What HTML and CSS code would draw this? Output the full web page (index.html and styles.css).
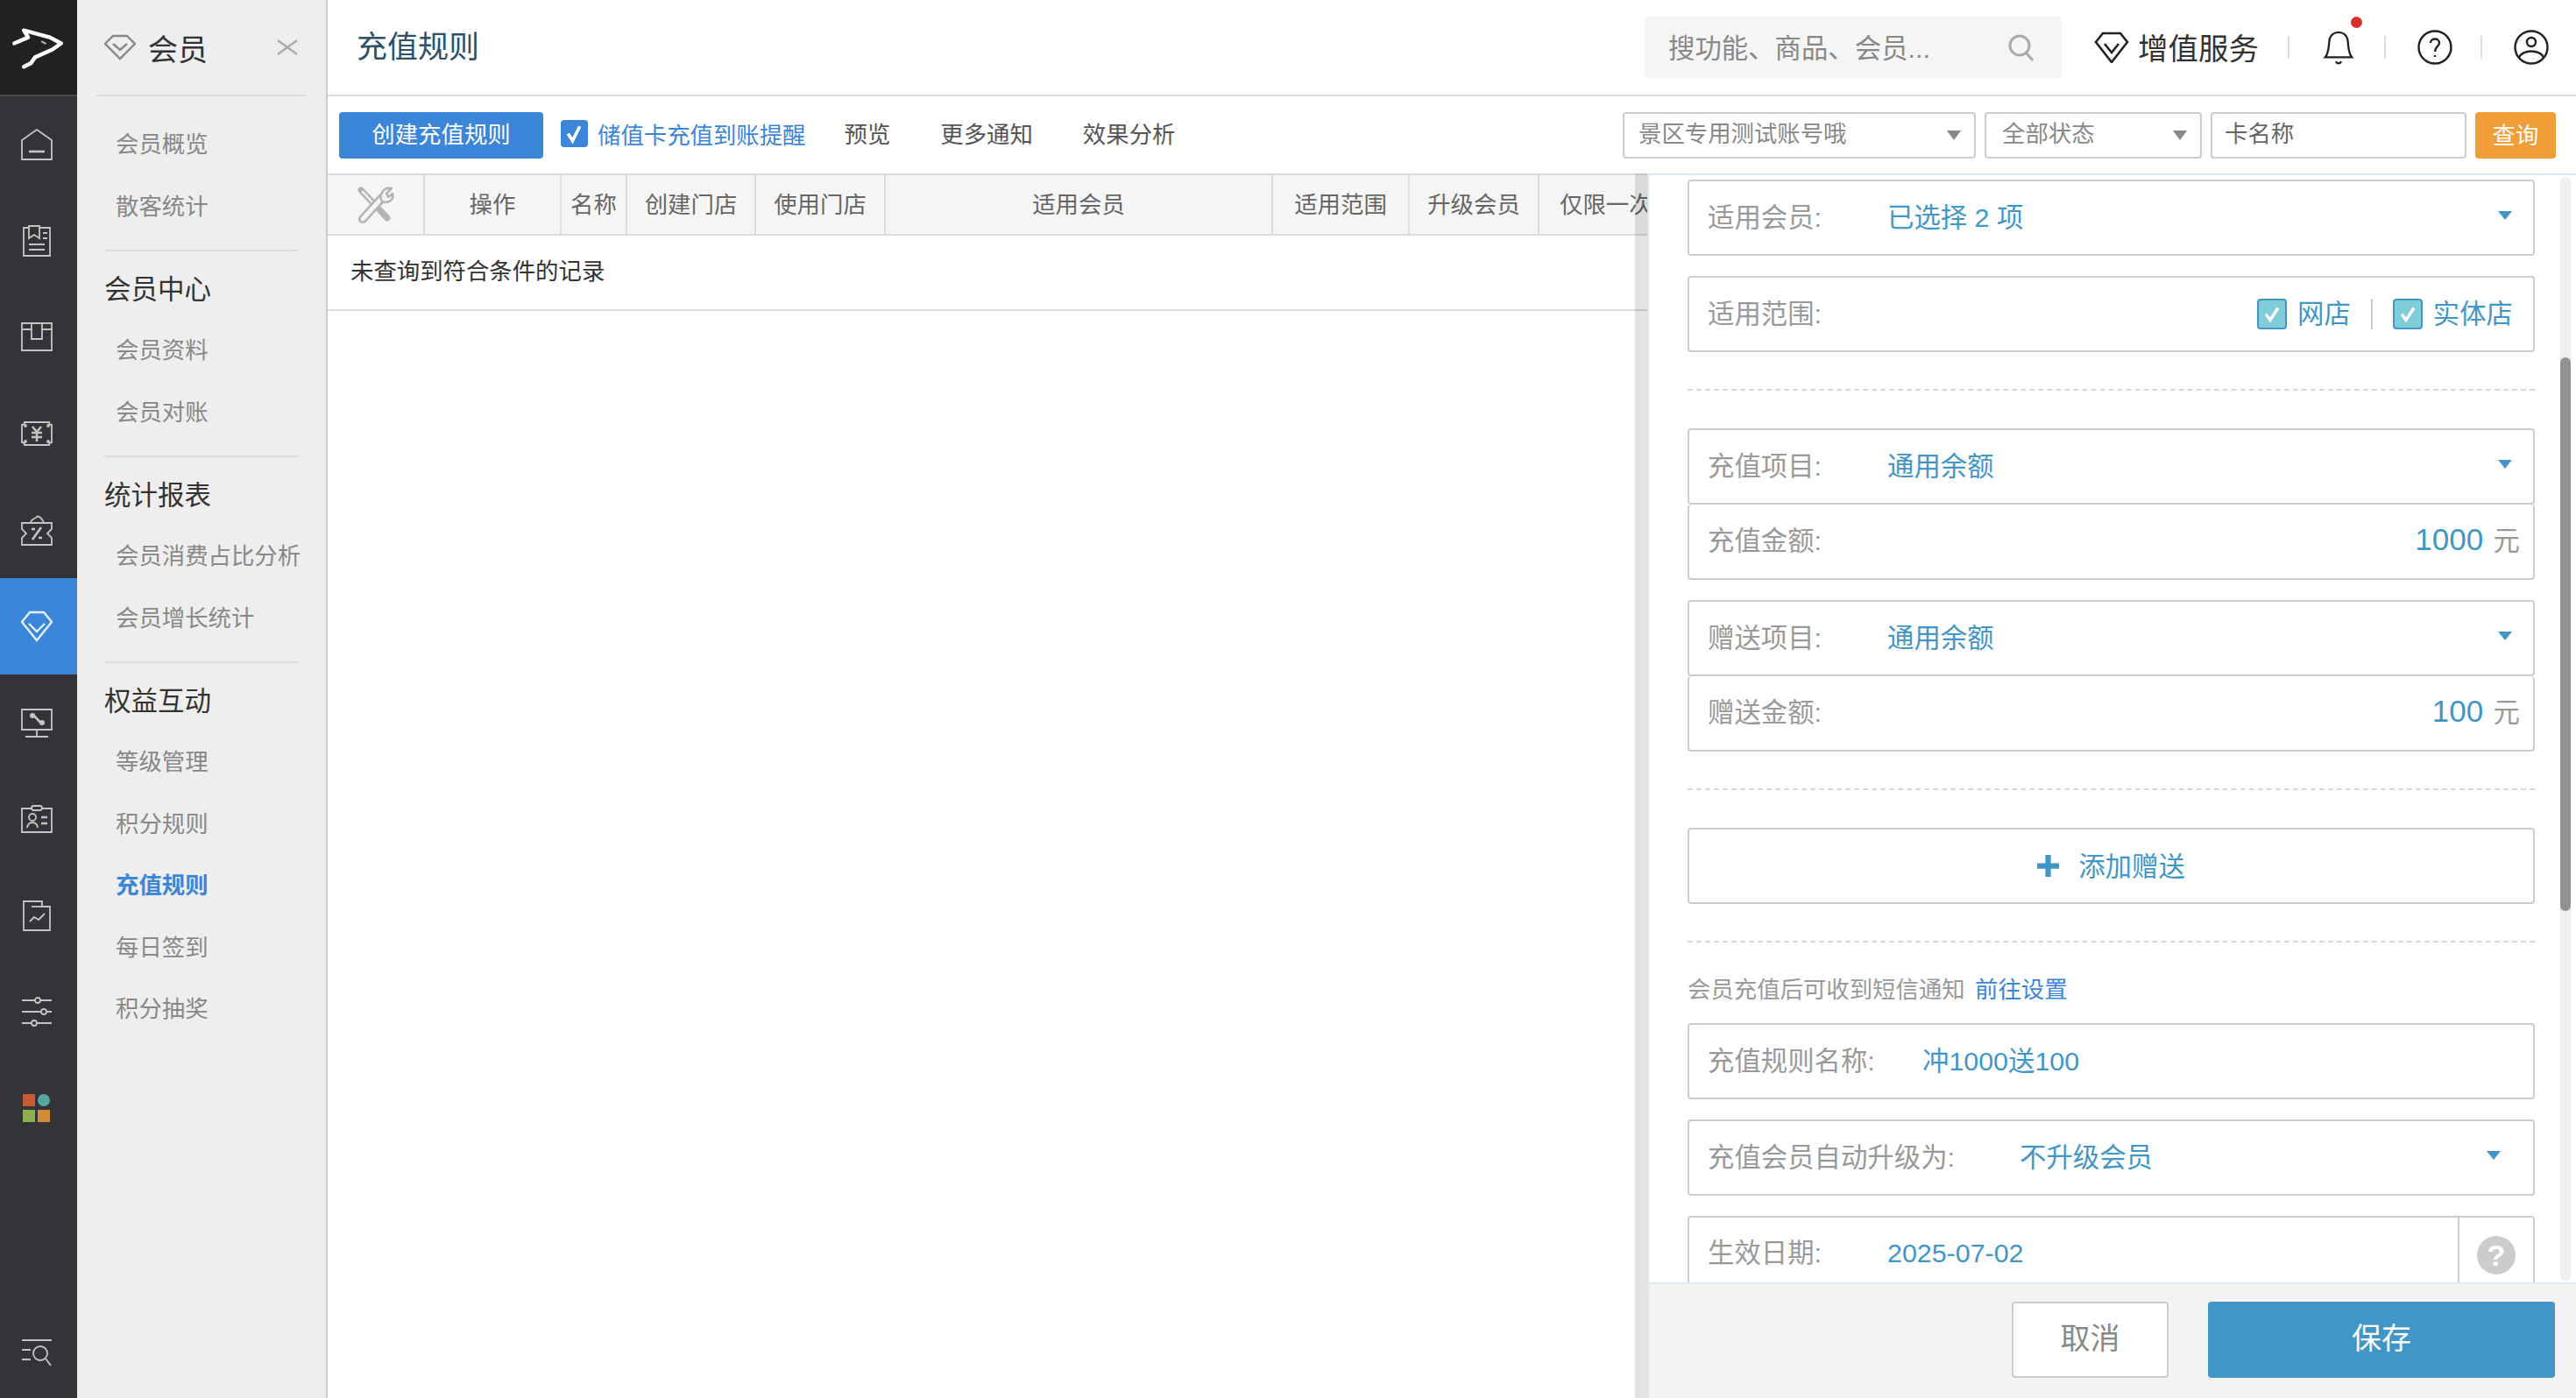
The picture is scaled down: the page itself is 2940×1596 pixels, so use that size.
FILE: index.html
```html
<!DOCTYPE html>
<html lang="zh-CN">
<head>
  <meta charset="UTF-8" />
  <title>充值规则</title>
  <link rel="stylesheet" href="styles.css">
</head>
<body>
  <!-- Icon rail -->
  <nav class="rail">
    <div class="rail-logo">
      <svg viewBox="0 0 88 109" class="logo-mark"><path d="M16 50 L32 43 L27 35 L57 43 L70 50 L60 57 L40 66 L35 73 L27 77"/><path d="M48 48 L52 50" class="logo-eye"/></svg>
    </div>
    <a class="rail-item"><svg viewBox="0 0 36 36" class="rail-icon"><path d="M1 13 L18 1 L35 13 V35 H1 Z"/><path d="M9 26 H27" class="icon-bold"/></svg></a>
    <a class="rail-item"><svg viewBox="0 0 36 36" class="rail-icon"><path d="M3 3 H33 V35 H3 Z"/><path d="M9 1 H21 V15 L15 11 L9 15 Z" class="icon-knob"/><path d="M25 9 H30 M25 15 H30 M9 22 H27 M9 28 H27"/></svg></a>
    <a class="rail-item"><svg viewBox="0 0 36 36" class="rail-icon"><path d="M1 2 H35 V33 H1 Z"/><path d="M1 9 H12 M24 9 H35"/><path d="M12 2 V20 H24 V2"/></svg></a>
    <a class="rail-item"><svg viewBox="0 0 36 36" class="rail-icon"><path d="M4 5 H32 Q32 8 35 8 V28 Q32 28 32 31 H4 Q4 28 1 28 V8 Q4 8 4 5 Z"/><circle cx="5" cy="9" r="1"/><circle cx="31" cy="9" r="1"/><circle cx="5" cy="27" r="1"/><circle cx="31" cy="27" r="1"/><path d="M13 10 L18 16 L23 10 M12 17 H24 M12 22 H24 M18 16 V27" class="icon-bold"/></svg></a>
    <a class="rail-item"><svg viewBox="0 0 36 36" class="rail-icon"><path d="M1 10 H35 V17 L30 22 L35 27 V35 H1 V27 L6 22 L1 17 Z"/><path d="M11 10 C11 5 16 6 18 3 C20 1 25 6 26 10"/><path d="M13 29 L23 15 M12 17 H16 M20 27 H24" class="icon-bold"/></svg></a>
    <a class="rail-item rail-item-active"><svg viewBox="0 0 36 36" class="rail-icon"><path d="M10 2 H26 L35 13 L18 34 L1 13 Z"/><path d="M9 15 L18 24 L27 15"/></svg></a>
    <a class="rail-item"><svg viewBox="0 0 36 36" class="rail-icon"><path d="M1 3 H35 V26 H1 Z"/><path d="M18 26 V33 M5 34 H31"/><path d="M13 8 L24 20" class="icon-bold"/><circle cx="13" cy="10" r="3" class="icon-dot"/><circle cx="24" cy="18" r="3" class="icon-dot"/></svg></a>
    <a class="rail-item"><svg viewBox="0 0 36 36" class="rail-icon"><path d="M1 6 H35 V33 H1 Z"/><rect x="12" y="3" width="12" height="5" rx="2.5" class="icon-knob"/><circle cx="13" cy="16" r="4"/><path d="M7 28 C8 20 18 20 19 28"/><path d="M23 16 H30 M23 23 H30" class="icon-bold"/></svg></a>
    <a class="rail-item"><svg viewBox="0 0 36 36" class="rail-icon"><path d="M3 2 H24 V8 H33 V35 H3 Z"/><path d="M12 8 H24"/><path d="M10 25 L15 20 L20 23 L27 16"/></svg></a>
    <a class="rail-item"><svg viewBox="0 0 36 36" class="rail-icon"><path d="M1 5 H35 M1 18 H35 M1 31 H35"/><circle cx="19" cy="5" r="3" class="icon-knob"/><circle cx="26" cy="18" r="3" class="icon-knob"/><circle cx="15" cy="31" r="3" class="icon-knob"/></svg></a>
    <a class="rail-item"><svg viewBox="0 0 32 32" class="rail-icon rail-apps"><rect x="0" y="0" width="14" height="14" class="app-red"/><ellipse cx="24" cy="7" rx="7" ry="7" class="app-teal"/><rect x="0" y="18" width="14" height="14" class="app-green"/><rect x="17" y="18" width="14" height="14" class="app-orange"/></svg></a>
    <a class="rail-item rail-bottom"><svg viewBox="0 0 36 36" class="rail-icon"><path d="M1 3 H35 M1 14 H11 M1 25 H11"/><circle cx="22" cy="18" r="8"/><path d="M28 24 L34 32"/></svg></a>
  </nav>

  <!-- Second level menu -->
  <aside class="subnav">
    <div class="subnav-head">
      <svg viewBox="0 0 36 36" class="subnav-gem"><path d="M10 5 H26 L35 14 L18 31 L1 14 Z"/><path d="M10 14 L18 21 L26 14"/></svg>
      <span class="subnav-title">会员</span>
      <svg viewBox="0 0 24 24" class="subnav-close"><path d="M1 4 L23 20 M23 4 L1 20"/></svg>
    </div>
    <ul class="menu-list menu-list-first">
      <li>会员概览</li>
      <li>散客统计</li>
    </ul>
    <h3 class="menu-title">会员中心</h3>
    <ul class="menu-list">
      <li>会员资料</li>
      <li>会员对账</li>
    </ul>
    <h3 class="menu-title">统计报表</h3>
    <ul class="menu-list">
      <li>会员消费占比分析</li>
      <li>会员增长统计</li>
    </ul>
    <h3 class="menu-title">权益互动</h3>
    <ul class="menu-list menu-list-last">
      <li>等级管理</li>
      <li>积分规则</li>
      <li class="menu-active">充值规则</li>
      <li>每日签到</li>
      <li>积分抽奖</li>
    </ul>
  </aside>

  <div class="main">
    <header class="topbar">
      <h1 class="page-title">充值规则</h1>
      <div class="search">
        <span class="search-text">搜功能、商品、会员...</span>
        <svg viewBox="0 0 32 32" class="search-icon"><circle cx="14" cy="14" r="11"/><path d="M22 23 L29 31"/></svg>
      </div>
      <div class="service">
        <svg viewBox="0 0 40 36" class="service-icon"><path d="M10 2 H30 L38 12 L20 35 L2 12 Z"/><path d="M12 14 L20 24 L28 14"/></svg>
        <span class="service-text">增值服务</span>
      </div>
      <i class="top-sep"></i>
      <div class="top-icon">
        <svg viewBox="0 0 40 44" class="top-svg"><path d="M4 34 C9 28 8 20 9 14 C10 7 15 4 20 4 C25 4 30 7 31 14 C32 20 31 28 36 34 Z"/><path d="M17 39 C18 42 22 42 23 39"/></svg>
        <b class="bell-dot"></b>
      </div>
      <i class="top-sep"></i>
      <div class="top-icon">
        <svg viewBox="0 0 40 40" class="top-svg"><circle cx="20" cy="20" r="18.5"/><path d="M15 15 C15 9 25 9 25 15 C25 19 20 19 20 25"/><path d="M20 29 V31"/></svg>
      </div>
      <i class="top-sep"></i>
      <div class="top-icon">
        <svg viewBox="0 0 40 40" class="top-svg"><circle cx="20" cy="20" r="18.5"/><circle cx="20" cy="14" r="5"/><path d="M6 32 C9 22 31 22 34 32"/></svg>
      </div>
    </header>

    <div class="toolbar">
      <button class="btn-create">创建充值规则</button>
      <label class="remind">
        <span class="remind-box"><svg viewBox="0 0 30 30" class="remind-check"><path d="M8 15 L13 23 L21 7"/></svg></span>
        <span>储值卡充值到账提醒</span>
      </label>
      <a class="tool-link">预览</a>
      <a class="tool-link">更多通知</a>
      <a class="tool-link">效果分析</a>
      <div class="filters">
        <div class="filter filter-shop">景区专用测试账号哦<i class="filter-caret"></i></div>
        <div class="filter filter-status">全部状态<i class="filter-caret"></i></div>
        <div class="filter filter-name">卡名称</div>
        <button class="btn-query">查询</button>
      </div>
    </div>

    <div class="content">
      <section class="table-wrap">
        <div class="table-head">
          <div class="th">
            <svg viewBox="0 0 44 44" class="tools-icon">
              <path d="M5 5 L35 37" class="tool-outer"/>
              <path d="M7 7 L20 21" class="tool-inner"/>
              <path d="M7 38 L29 14" class="wrench-outer"/>
              <path d="M7 38 L29 14" class="wrench-inner"/>
              <path d="M40 3 L34 9 L36 13 L41 9 C43 16 36 21 29 18 C25 12 30 1 40 3 Z" class="wrench-head"/>
            </svg>
          </div>
          <div class="th">操作</div>
          <div class="th">名称</div>
          <div class="th">创建门店</div>
          <div class="th">使用门店</div>
          <div class="th">适用会员</div>
          <div class="th">适用范围</div>
          <div class="th">升级会员</div>
          <div class="th th-clip">仅限一次</div>
        </div>
        <div class="table-empty">未查询到符合条件的记录</div>
      </section>

      <div class="panel-edge"></div>

      <section class="panel">
        <div class="panel-body">
          <div class="field field-single">
            <span class="field-label">适用会员:</span>
            <span class="field-value">已选择 2 项</span>
            <i class="caret"></i>
          </div>
          <div class="field field-single">
            <span class="field-label">适用范围:</span>
            <div class="scope">
              <span class="scope-box"><svg viewBox="0 0 30 30" class="scope-check"><path d="M8 15 L13 22 L22 8"/></svg></span>
              <span class="field-value">网店</span>
              <i class="scope-sep"></i>
              <span class="scope-box"><svg viewBox="0 0 30 30" class="scope-check"><path d="M8 15 L13 22 L22 8"/></svg></span>
              <span class="field-value">实体店</span>
            </div>
          </div>

          <hr class="dash">

          <div class="field-group">
            <div class="field">
              <span class="field-label">充值项目:</span>
              <span class="field-value">通用余额</span>
              <i class="caret"></i>
            </div>
            <div class="field field-amount">
              <span class="field-label">充值金额:</span>
              <span class="amount"><span class="amount-num">1000</span> 元</span>
            </div>
          </div>
          <div class="field-group">
            <div class="field">
              <span class="field-label">赠送项目:</span>
              <span class="field-value">通用余额</span>
              <i class="caret"></i>
            </div>
            <div class="field field-amount">
              <span class="field-label">赠送金额:</span>
              <span class="amount"><span class="amount-num">100</span> 元</span>
            </div>
          </div>

          <hr class="dash">

          <div class="field field-add">
            <svg viewBox="0 0 24 24" class="plus-icon"><path d="M9 0 H15 V9 H24 V15 H15 V24 H9 V15 H0 V9 H9 Z"/></svg>
            <span class="field-value">添加赠送</span>
          </div>

          <hr class="dash dash-note">

          <p class="sms-note">会员充值后可收到短信通知 <a class="sms-link">前往设置</a></p>

          <div class="field field-single">
            <span class="field-label label-name">充值规则名称:</span>
            <span class="field-value">冲1000送100</span>
          </div>
          <div class="field field-single">
            <span class="field-label label-upgrade">充值会员自动升级为:</span>
            <span class="field-value">不升级会员</span>
            <i class="caret caret-upgrade"></i>
          </div>
          <div class="field field-date">
            <span class="field-label">生效日期:</span>
            <span class="field-value">2025-07-02</span>
            <span class="date-help"><b class="help-circle">?</b></span>
          </div>
        </div>
        <div class="panel-foot">
          <button class="btn-cancel">取消</button>
          <button class="btn-save">保存</button>
        </div>
        <div class="scrollbar"><div class="scrollbar-thumb"></div></div>
      </section>
    </div>
  </div>
</body>
</html>
```

FILE: styles.css
```css
/* Reset and base */
* {
  margin: 0;
  padding: 0;
  box-sizing: border-box;
}
html, body {
  width: 2940px;
  height: 1596px;
  overflow: hidden;
}
body {
  display: flex;
  font-family: "Liberation Sans", "Noto Sans CJK SC", sans-serif;
  font-size: 26.4px;
  color: #333;
  background: #fff;
}
button {
  font-family: inherit;
  border: none;
}
svg {
  display: block;
}
ul {
  list-style: none;
}
i {
  font-style: normal;
}

/* Icon rail */
.rail {
  width: 88px;
  flex: none;
  height: 1596px;
  display: flex;
  flex-direction: column;
  background: #333437;
}
.rail-logo {
  height: 110px;
  flex: none;
  background: #222120;
  border-bottom: 2px solid #47484a;
}
.logo-mark {
  width: 88px;
  height: 108px;
  fill: none;
  stroke: #fff;
  stroke-width: 4.5;
  stroke-linejoin: round;
  stroke-linecap: round;
}
.logo-eye {
  stroke-width: 2;
  stroke: #bbb;
}
.rail-item {
  height: 110px;
  flex: none;
  display: flex;
  align-items: center;
  justify-content: center;
  padding-right: 5px;
}
.rail-item-active {
  background: #3b86d8;
}
.rail-bottom {
  height: 102px;
  margin-top: auto;
}
.rail-icon {
  width: 36px;
  height: 36px;
  fill: none;
  stroke: #c4c4c4;
  stroke-width: 1.8;
}
.rail-item-active .rail-icon {
  stroke: #e6f0fa;
  stroke-width: 2.4;
}
.icon-bold {
  stroke-width: 2.6;
}
.icon-knob {
  fill: #333437;
}
.icon-dot {
  fill: #c4c4c4;
  stroke: none;
}
.rail-apps {
  width: 32px;
  height: 32px;
  stroke: none;
}
.app-red { fill: #c95a36; }
.app-teal { fill: #58a69c; }
.app-green { fill: #8cb04e; }
.app-orange { fill: #d28b36; }

/* Second level menu */
.subnav {
  width: 286px;
  flex: none;
  height: 1596px;
  padding: 0 31px 0 31px;
  background: #eee;
  border-right: 2px solid #ccc;
}
.subnav-head {
  height: 110px;
  display: flex;
  align-items: center;
  margin: 0 -9px 0 -9px;
  padding: 0 10px 0 9px;
  border-bottom: 2px solid #ddd;
}
.subnav-gem {
  width: 36px;
  height: 36px;
  fill: none;
  stroke: #888;
  stroke-width: 2.4;
}
.subnav-title {
  margin-left: 14px;
  font-size: 34px;
  color: #333;
}
.subnav-close {
  width: 24px;
  height: 24px;
  margin-left: auto;
  fill: none;
  stroke: #aaa;
  stroke-width: 2.4;
}
.menu-list {
  padding: 0 0 14px;
  border-bottom: 2px solid #ddd;
}
.menu-list-first {
  padding-top: 20px;
}
.menu-list-last {
  border-bottom: none;
}
.menu-list li {
  height: 70.5px;
  line-height: 71px;
  padding-left: 13px;
  color: #888;
  white-space: nowrap;
}
.menu-list li.menu-active {
  color: #3b86d8;
  font-weight: 700;
}
.menu-title {
  height: 78px;
  padding-top: 21px;
  font-size: 30.5px;
  line-height: 44px;
  font-weight: 400;
  color: #333;
  white-space: nowrap;
}

/* Main column */
.main {
  flex: 1;
  min-width: 0;
  display: flex;
  flex-direction: column;
  height: 1596px;
}
.topbar {
  height: 110px;
  flex: none;
  display: flex;
  align-items: center;
  padding: 0 31px 0 33px;
  border-bottom: 2px solid #ddd;
}
.page-title {
  font-size: 35px;
  font-weight: 400;
  color: #2f5069;
  margin-bottom: 7px;
}
.search {
  width: 476px;
  height: 70px;
  margin-left: auto;
  display: flex;
  align-items: center;
  justify-content: space-between;
  padding: 0 30px 0 27px;
  background: #f5f5f5;
  border-radius: 4px;
  font-size: 30.4px;
  color: #888;
}
.search-text {
  margin-bottom: 3px;
}
.search-icon {
  width: 32px;
  height: 32px;
  fill: none;
  stroke: #aaa;
  stroke-width: 3;
}
.service {
  display: flex;
  align-items: center;
  gap: 10px;
  margin-left: 37px;
  margin-right: 1px;
  font-size: 34.5px;
  color: #333;
}
.service-text {
  margin-bottom: 3px;
}
.service-icon {
  width: 40px;
  height: 36px;
  fill: none;
  stroke: #222;
  stroke-width: 2.6;
}
.top-sep {
  width: 2px;
  height: 26px;
  margin-left: 32px;
  background: #ddd;
}
.top-icon {
  position: relative;
  width: 40px;
  margin-left: 36px;
}
.top-svg {
  width: 40px;
  height: 42px;
  fill: none;
  stroke: #222;
  stroke-width: 2.4;
}
.bell-dot {
  position: absolute;
  top: -14px;
  right: -7px;
  width: 13px;
  height: 13px;
  border-radius: 50%;
  background: #d9302c;
}

/* Toolbar */
.toolbar {
  height: 88px;
  flex: none;
  display: flex;
  align-items: center;
  padding: 1px 23px 0 13px;
}
.btn-create {
  width: 233px;
  height: 53px;
  padding-bottom: 6px;
  background: #3b86d8;
  color: #fff;
  font-size: 26.4px;
  border-radius: 4px;
}
.remind {
  display: flex;
  align-items: center;
  gap: 11px;
  margin-left: 20px;
  margin-bottom: 4px;
  color: #3b86d8;
}
.remind-box {
  width: 31px;
  height: 31px;
  background: #3b86d8;
  border-radius: 4px;
}
.remind-check {
  width: 31px;
  height: 31px;
  fill: none;
  stroke: #fff;
  stroke-width: 3.5;
}
.tool-link {
  margin-left: 57px;
  margin-bottom: 6px;
  color: #555;
}
.remind + .tool-link {
  margin-left: 44px;
}
.filters {
  margin-left: auto;
  display: flex;
  align-items: center;
  gap: 10px;
  margin-top: -1px;
}
.filter {
  position: relative;
  height: 53px;
  line-height: 46px;
  padding-left: 16px;
  border: 2px solid #ccc;
  border-radius: 4px;
  color: #888;
}
.filter-shop { width: 403px; }
.filter-status { width: 248px; padding-left: 18px; }
.filter-name { width: 292px; padding-left: 14px; color: #666; }
.filter-caret {
  position: absolute;
  top: 19px;
  right: 15px;
  width: 0;
  height: 0;
  border-left: 8px solid transparent;
  border-right: 8px solid transparent;
  border-top: 11px solid #888;
}
.btn-query {
  width: 92px;
  height: 53px;
  padding-bottom: 4px;
  background: #f19d38;
  color: #fff;
  font-size: 26.4px;
  border-radius: 4px;
}

/* Content: table + slide panel */
.content {
  position: relative;
  flex: 1;
  min-height: 0;
  display: flex;
}
.table-wrap {
  width: 1506px;
  flex: none;
  overflow: hidden;
}
.table-head {
  display: grid;
  grid-template-columns: 111px 156px 75px 147px 148px 442px 156px 148px 123px;
  height: 71px;
  background: #f5f5f5;
  border-top: 2px solid #ddd;
  border-bottom: 2px solid #ddd;
}
.th {
  display: flex;
  align-items: center;
  justify-content: center;
  padding-bottom: 5px;
  border-right: 2px solid #ddd;
  color: #666;
  white-space: nowrap;
}
.th:first-child {
  padding-bottom: 0;
}
.th-clip {
  justify-content: flex-start;
  padding-left: 23px;
  border-right: none;
  overflow: hidden;
}
.tools-icon {
  width: 44px;
  height: 44px;
  fill: none;
  stroke-linecap: round;
}
.tool-outer {
  stroke: #b4b4b4;
  stroke-width: 7;
}
.tool-inner {
  stroke: #f5f5f5;
  stroke-width: 2.5;
}
.wrench-outer {
  stroke: #b4b4b4;
  stroke-width: 10;
}
.wrench-inner {
  stroke: #f5f5f5;
  stroke-width: 5;
}
.wrench-head {
  fill: #f5f5f5;
  stroke: #b4b4b4;
  stroke-width: 2.5;
  stroke-linejoin: round;
}
.table-empty {
  height: 86px;
  line-height: 82px;
  padding-left: 26px;
  border-bottom: 2px solid #ddd;
  color: #333;
}
.panel-edge {
  position: absolute;
  top: 0;
  bottom: 0;
  left: 1492px;
  width: 14px;
  background: rgba(0, 0, 0, 0.11);
}
.panel {
  position: relative;
  flex: 1;
  min-width: 0;
  display: flex;
  flex-direction: column;
  border-top: 2px solid #dbe8ee;
  border-left: 2px solid #dbe8ee;
}
.panel-body {
  flex: 1;
  min-height: 0;
  overflow: hidden;
  padding: 5px 47px 0 44px;
}
.field {
  display: flex;
  align-items: center;
  height: 87px;
  padding: 0 0 6px 21px;
  border: 2px solid #ccc;
  border-radius: 4px;
  font-size: 30.4px;
}
.field-single,
.field-group {
  margin-bottom: 23px;
}
.field-amount {
  height: 86px;
  border-top: none;
}
.field-label {
  width: 205px;
  flex: none;
  color: #999;
}
.label-name { width: 245px; }
.label-upgrade { width: 356px; }
.field-value {
  color: #4196c8;
}
.caret {
  margin-left: auto;
  margin-right: 24px;
  width: 0;
  height: 0;
  border-left: 8px solid transparent;
  border-right: 8px solid transparent;
  border-top: 10px solid #4196c8;
}
.caret-upgrade {
  margin-right: 37px;
}
.scope {
  margin-left: auto;
  margin-right: 23px;
  display: flex;
  align-items: center;
}
.scope-box {
  width: 34px;
  height: 35px;
  margin: 6px 12px 0 0;
  background: #80ccd8;
  border: 2px solid #4196c8;
  border-radius: 4px;
}
.scope-check {
  width: 30px;
  height: 31px;
  fill: none;
  stroke: #fff;
  stroke-width: 3.5;
}
.scope-sep {
  width: 2px;
  height: 35px;
  margin: 6px 23px 0;
  background: #ccc;
}
.dash {
  height: 0;
  margin: 42px 0 43px;
  border: none;
  border-top: 2px dashed #d6d6d6;
}
.dash-note {
  margin-bottom: 30px;
}
.field-add {
  justify-content: center;
  padding: 0 0 4px;
}
.plus-icon {
  width: 25px;
  height: 25px;
  margin: 4px 22px 0 0;
  fill: #4196c8;
}
.amount {
  margin-left: auto;
  margin-right: 15px;
  color: #999;
}
.amount-num {
  font-size: 35px;
  color: #4196c8;
  margin-right: 3px;
}
.sms-note {
  height: 62px;
  line-height: 48px;
  color: #999;
}
.sms-link {
  color: #3b86d8;
  margin-left: 4px;
}
.field-date {
  height: 100px;
  padding-bottom: 0;
  align-items: flex-start;
  line-height: 80px;
}
.date-help {
  margin-left: auto;
  width: 86px;
  height: 100px;
  display: flex;
  justify-content: center;
  padding-top: 21px;
  border-left: 2px solid #ccc;
}
.help-circle {
  width: 44px;
  height: 44px;
  border-radius: 50%;
  background: #ccc;
  color: #fff;
  font-size: 34px;
  line-height: 44px;
  text-align: center;
}
.panel-foot {
  height: 132px;
  flex: none;
  display: flex;
  align-items: center;
  justify-content: flex-end;
  gap: 45px;
  padding: 0 24px 4px 0;
  background: #f3f3f3;
  border-top: 2px solid #dbe8ee;
}
.btn-cancel {
  width: 179px;
  height: 87px;
  padding-bottom: 8px;
  background: #fff;
  border: 2px solid #ccc;
  border-radius: 4px;
  color: #888;
  font-size: 34px;
}
.btn-save {
  width: 396px;
  height: 87px;
  padding-bottom: 8px;
  background: #4196c8;
  border-radius: 4px;
  color: #fff;
  font-size: 34px;
}
.scrollbar {
  position: absolute;
  top: 2px;
  right: 6px;
  width: 12px;
  height: 1261px;
  background: #f0f0f0;
  border-radius: 6px;
}
.scrollbar-thumb {
  height: 632px;
  margin-top: 206px;
  background: #909090;
  border-radius: 6px;
}
```
